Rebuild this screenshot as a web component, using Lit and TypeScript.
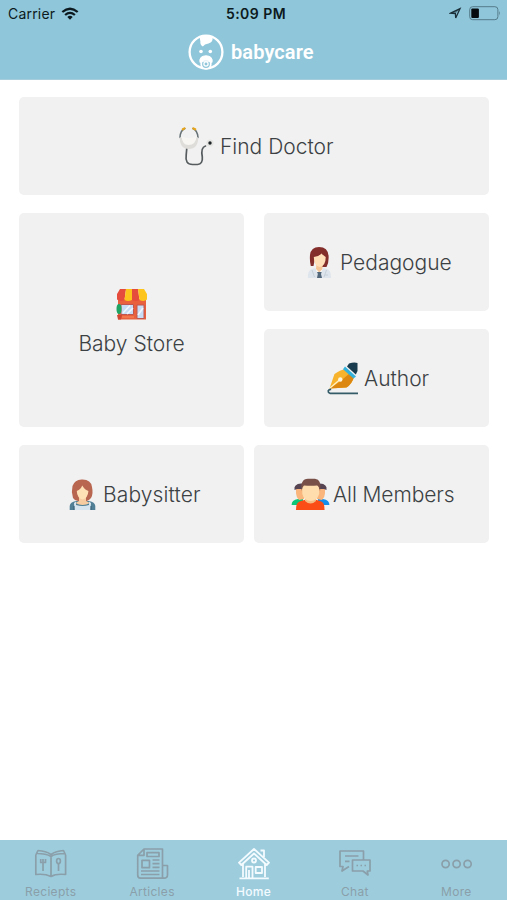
import { LitElement, html, css, svg } from "lit";
import { customElement, property } from "lit/decorators.js";
import { classMap } from "lit/directives/class-map.js";

const wifi = html`<svg width="18" height="13" viewBox="0 0 18 13" fill="none" stroke="#0c1a20" stroke-width="2.3">
  <path d="M1.3 5 Q9 -1.6 16.7 5" /><path d="M4.1 8 Q9 3.8 13.9 8" />
  <path d="M6.3 9.9 Q9 7.6 11.7 9.9 L9 12.7Z" fill="#0c1a20" stroke="none" />
</svg>`;

const arrow = html`<svg width="13" height="13" viewBox="0 0 13 13" fill="none" stroke="#1c3039" stroke-width="1.3">
  <path d="M1.6 6.2 L11 1.7 L6.7 11 L6.4 6.5Z" /><path d="M1.6 6.2 L11 1.7 L6.4 6.5Z" fill="#1c3039" fill-opacity=".5" stroke="none" />
</svg>`;

const battery = html`<svg width="32" height="15" viewBox="0 0 32 15">
  <rect x="0.7" y="0.7" width="28.2" height="13" rx="3" fill="none" stroke="#547b89" stroke-width="1" />
  <rect x="2.3" y="2.4" width="7.6" height="9.6" rx="1" fill="#050b0e" />
  <path d="M30.2 5 Q32 7.2 30.2 9.4Z" fill="#547b89" />
</svg>`;

const babyLogo = html`<svg width="36" height="36" viewBox="0 0 36 36" fill="none" stroke="#fff">
  <circle cx="18" cy="18" r="16.4" stroke-width="2.3" />
  <path d="M11.5 2.5 Q18 0 24.5 3 Q25.5 8 20.5 9.5 Q16.5 9.8 14.8 12.5 Q11.8 10.5 12.4 7.5 Z" fill="#fff" stroke="none" />
  <circle cx="13" cy="17.5" r="1.8" fill="#fff" stroke="none" /><circle cx="22.3" cy="17.5" r="1.8" fill="#fff" stroke="none" />
  <path d="M12 28.5 Q10.8 22 18 21.8 Q25.2 22 24 28.5 Q18 23.5 12 28.5Z" fill="#fff" stroke-width="1" />
  <circle cx="18" cy="30" r="4.8" fill="#8fc6da" stroke-width="1.8" />
  <circle cx="18" cy="30" r="2.1" stroke-width="1.3" />
  <path d="M14 27 H22" stroke-width="1.6" />
</svg>`;

const stethoscope = html`<svg width="36" height="40" viewBox="0 0 36 40" fill="none" stroke-linecap="round">
  <path d="M8.8 22 L8.2 29 Q6.8 38.5 14.5 38.5 H19.5 Q25 38 24.3 31 Q22.5 21.5 27.5 20" stroke="#565c5e" stroke-width="1.7" />
  <path d="M2 11.5 Q2.2 4.5 6.8 2.5 M20 11.5 Q19.5 4.5 15 2.5" stroke="#687377" stroke-width="1.6" />
  <path d="M4.8 3.3 L6.5 2.4 M17.2 3.3 L15.3 2.4" stroke="#e7a51c" stroke-width="2.2" />
  <path d="M1.8 11 Q11 16.5 20.2 11 Q20.3 23 10.8 23 Q1.5 23 1.8 11Z" fill="#deddd9" />
  <path d="M3.6 10 Q11 14.5 18.5 10 Q18 19 10.5 19 Q4 19 3.6 10Z" fill="#f7f6f3" />
  <circle cx="32" cy="17" r="3.6" fill="#e5e5e3" /><circle cx="32" cy="17" r="1.7" fill="#1d2224" />
</svg>`;

const store = html`<svg width="32" height="33" viewBox="0 0 32 33">
  <path d="M2 11 H30 V31.5 H2Z" fill="#e9603f" />
  <path d="M4 1 H10 L8.5 12 Q4.5 14 1 11.5 V6 Z" fill="#e64c3c" />
  <path d="M10 1 H16 V12 Q12 14 8.5 12Z" fill="#fdc51b" />
  <path d="M16 1 H22 L23.5 12 Q20 14 16 12Z" fill="#e64c3c" />
  <path d="M22 1 H28 L31 6 V11.5 Q28 14 23.5 12Z" fill="#fdc51b" />
  <path d="M5 16.5 H17.5 V26.5 H5Z M21 17 H28 V30.5 H21Z" fill="#c8dcf5" stroke="#c05650" stroke-width="1" />
  <path d="M7 25 L14 17.5 M11 26 L17 20 M22 27 L27 20" stroke="#f0f6ff" stroke-width="1.6" />
  <path d="M6 29 H18" stroke="#f2764d" stroke-width="2" />
  <ellipse cx="3" cy="21" rx="2.5" ry="5" fill="#1fa463" /><path d="M1 27 H6 L5 31.5 H2Z" fill="#cf4732" />
</svg>`;

const pedagogue = html`<svg width="25" height="33" viewBox="0 0 25 33">
  <path d="M0.8 32 Q0.5 24 5 23 L9 22 H15 L20 23 Q24.3 24 24 32Z" fill="#dfe5ec" />
  <path d="M8.5 22 L12 32 L16 22Z" fill="#f9fbfc" />
  <path d="M3.8 20 Q2.5 15 3 9 Q4 1 12 1 Q21 1 21.6 10 Q22 17 19.5 21 H15 V12 H8 L6.5 20Z" fill="#842e2c" />
  <path d="M9.5 17 H15.5 V23 L12.3 26.5 L9 23Z" fill="#f5c798" />
  <path d="M6.8 11 Q12 10.7 14.4 7.4 Q17 10 18.7 11 Q18.8 20 12.7 21 Q7 20 6.8 11Z" fill="#ffdfb7" />
  <path d="M10 26 H14.7 L14 28 L15 32 H10 L10.8 28Z" fill="#53677b" />
  <path d="M5 24 L7.5 31 M19.5 24 L17 31 M18 29 H21" stroke="#c6d0d9" stroke-width="1" />
</svg>`;

const pen = html`<svg width="32" height="33" viewBox="0 0 32 33">
  <path d="M2.5 26.5 L7.5 12 Q14 7.5 19 7 L27 15 Q25 22 19.5 25.5Z" fill="#f7b32b" />
  <path d="M2.5 26.5 L13 19.5 L23 11 L27 15 Q25 22 19.5 25.5Z" fill="#dc8810" />
  <path d="M3 26 L13 17.5" stroke="#fff2c8" stroke-width="1.2" /><circle cx="13.3" cy="17.5" r="2.2" fill="#fff6df" />
  <path d="M18 4.5 L29 14.5 L26.5 16.5 L16 7.2Z" fill="#34b2dc" />
  <path d="M22 1.5 Q27 0 30.5 1 V9 L28.8 12.5 L20 4.5Z" fill="#183b4d" />
  <path d="M31 31.3 H3 Q1 30.5 1.2 28.8 Q2 27.2 4.2 27.4" fill="none" stroke="#345b68" stroke-width="1.7" />
</svg>`;

const sitter = html`<svg width="27" height="33" viewBox="0 0 27 33">
  <path d="M4 20 Q2 14 3.5 8 Q6 1 13.5 1.5 Q22 1.5 23 9 Q24.5 16 22 20 Q19 24 16 23 H9Q6 23 4 20Z" fill="#b96650" />
  <path d="M0.7 32 V28 Q1 24 7 23 H20 Q26 24 26.3 28 V32Z" fill="#517f96" />
  <path d="M10 17 H17 V23 L21 25 Q13.5 29 6.5 25 L10 23Z" fill="#f6cca0" />
  <path d="M7.8 13 Q12 11 13.2 7.5 Q16 12 19.4 13 Q19 20 13.5 21.5 Q8 20 7.8 13Z" fill="#ffe1b6" />
  <path d="M7 23.5 V27 Q13.5 29 20 27 V23.5 L22 25 L21.5 32 H5.5 L5 25Z" fill="#d6e5ef" />
  <path d="M5 28 V32 M22 28 V32" stroke="#365f76" stroke-width="1" />
</svg>`;

const members = html`<svg width="39" height="33" viewBox="0 0 39 33">
  <path d="M0.6 27 Q0.5 22 7 21 H12 V27Z" fill="#0bc779" /><path d="M38.4 27 Q38.5 22 32 21 H27 V27Z" fill="#168fea" />
  <path d="M5 10 H13 V21 L8 22 Q5 19 5 15Z" fill="#f9b57c" /><path d="M34 10 H26 V21 L31 22 Q34 19 34 15Z" fill="#f9b57c" />
  <path d="M3.5 12 Q2.5 6 10 5.5 H13 V11 H6Z M35.5 12 Q36.5 6 29 5.5 H26 V11 H33Z" fill="#564452" />
  <path d="M5 32 Q4.5 24 10 23 L15 21.5 H24 L29 23 Q34 24 33.5 32Z" fill="#fb4d16" />
  <path d="M14 19 H25 V23 Q19.5 28 14 23Z" fill="#f5bd82" />
  <path d="M11.3 7 H28.2 V16 Q26 23 19.8 23 Q13 23 11.3 16Z" fill="#ffddac" />
  <path d="M10.5 13 Q9 1 17 .8 H24 Q31 1.5 29 13 Q28 8 26 7.5 Q20 8 13 7.5 Q11 9 10.5 13Z" fill="#795047" />
</svg>`;

const tabIcons: Record<string, unknown> = {
  Reciepts: svg`<path d="M4.2 6.5 Q13 6.5 18 9.5 Q22 6.5 31.8 6.5 M2.8 8 V27.5 Q12 26.5 18 29.5 Q23 26.5 32.6 27.5 V8 M18 9.5 V29 M2.8 8 L5 3.5 Q13 4 18 7.5 Q23 4 30.5 3.5 L32.6 8 M10 15 V24 M7.7 12 V15.5 H12.5 V12 M10 12 V16 M25.5 16.5 V24"/><ellipse cx="25.5" cy="14" rx="1.9" ry="2.5"/>`,
  Articles: svg`<path d="M9 2 H27.5 V31.2 H5.5 Q2.7 31 2.7 28 V8.3Z M9 2 V8.3 H2.7 M27.5 18.5 H32.5 V28 Q32.5 31.2 29 31.2 H6 M12 5.7 H24 V9.5 H12Z M7 13.3 H14.5 V20.7 H7Z M17.5 13 H24.5 M17.5 16.7 H24.5 M17.5 20.3 H24.5 M6 24 H24.5 M6 27.5 H24.5"/>`,
  Home: svg`<path d="M3 15.7 L18 2 L33 15.7 L30.7 18 L18 6.5 L5.3 18Z M7 17 V30 M29 17 V30 M3.5 31.3 H32.8 M10.2 31 V19.7 H16.5 V31 M13 31 V23 M19.7 20 H26 V26 H19.7Z M24.5 3.5 H28 V10"/><circle cx="18" cy="13.5" r="2"/>`,
  Chat: svg`<path d="M12 19.5 L5 24 L6 19.5 H3 V4 H26.5 V12.5 M15.5 13 H33 V24 H30.3 L31 28 L26 24 H15.5Z M8 9 H21.5 M8 14.3 H12.5"/><path d="M19.5 18.5 H21 M23.5 18.5 H25 M27.5 18.5 H29"/>`,
  More: svg`<circle cx="6.6" cy="17" r="3.6"/><circle cx="17.6" cy="17" r="3.6"/><circle cx="28.6" cy="17" r="3.6"/>`,
};

@customElement("app-tab")
class AppTab extends LitElement {
  @property() label = "";
  @property({ type: Boolean }) active = false;
  static styles = css`
    :host { display: block; flex: 1; }
    .tab { display: flex; flex-direction: column; align-items: center; padding-top: 7px; color: #8a9fa9; }
    .active { color: #f4fbff; }
    svg { display: block; fill: none; stroke: currentColor; stroke-width: 1.7; stroke-linejoin: round; }
    .active svg { stroke-width: 1.8; }
    .text { font: 400 12px/16px Inter, sans-serif; letter-spacing: 0.3px; margin-top: 3px; white-space: nowrap; }
    .active .text { font-weight: 500; }
  `;
  render() {
    return html`<div class=${classMap({ tab: true, active: this.active })}>
      <svg width="35" height="34" viewBox="0 0 35 34">${tabIcons[this.label]}</svg>
      <span class="text">${this.label}</span>
    </div>`;
  }
}

@customElement("app-root")
class AppRoot extends LitElement {
  static styles = css`
    :host { display: flex; flex-direction: column; height: 900px; width: 507px; background: #fff; overflow: hidden; font-family: Inter, sans-serif; }
    * { box-sizing: border-box; }
    svg { display: block; flex: none; }
    .header { height: 80px; background: #8fc6da; border-bottom: 1px solid #a5cddb; flex: none; }
    .status { display: grid; grid-template-columns: 1fr auto 1fr; height: 27px; align-items: center; color: #0c1a20; }
    .left { display: flex; align-items: center; gap: 6px; padding-left: 8px; }
    .carrier { font-size: 14px; letter-spacing: 0.2px; }
    .time { font-size: 14px; font-weight: 600; letter-spacing: 0.45px; padding-left: 5px; }
    .right { display: flex; align-items: center; justify-content: flex-end; gap: 7px; padding-right: 6px; }
    .brand { display: flex; align-items: center; padding: 7px 0 0 188px; gap: 7px; color: #fff; }
    .name { font: 600 20px/24px Roboto, sans-serif; margin-top: -1px; letter-spacing: 0.1px; }
    .content { flex: 1; padding: 17px 18px 0 19px; display: flex; flex-direction: column; gap: 18px; }
    .card { height: 98px; background: #f1f1f1; border-radius: 5px; display: flex; align-items: center; color: #3c4144; }
    .card span { font-size: 21px; line-height: 26px; font-weight: 300; white-space: nowrap; padding-top: 2px; }
    .doctor { padding-left: 159px; gap: 6px; }
    .middle { display: grid; grid-template-columns: 225px 225px; gap: 18px 20px; }
    .store { grid-row: span 2; height: 214px; flex-direction: column; padding-top: 75px; gap: 8px; }
    .pedagogue { padding-left: 43px; gap: 8px; }
    .author { padding-left: 63px; gap: 5px; }
    .bottom { display: grid; grid-template-columns: 225px 235px; gap: 10px; }
    .sitter { padding-left: 50px; gap: 7px; }
    .sitter span { letter-spacing: 0.12px; }
    .members { padding-left: 37px; gap: 3px; }
    .members span { letter-spacing: -0.08px; }
    .tabs { height: 60px; display: flex; background: #9dcddd; flex: none; }
  `;
  render() {
    return html`
      <div class="header">
        <div class="status">
          <div class="left"><span class="carrier">Carrier</span>${wifi}</div>
          <span class="time">5:09 PM</span>
          <div class="right">${arrow}${battery}</div>
        </div>
        <div class="brand">${babyLogo}<span class="name">babycare</span></div>
      </div>
      <div class="content">
        <div class="card doctor">${stethoscope}<span>Find Doctor</span></div>
        <div class="middle">
          <div class="card store">${store}<span>Baby Store</span></div>
          <div class="card pedagogue">${pedagogue}<span>Pedagogue</span></div>
          <div class="card author">${pen}<span>Author</span></div>
        </div>
        <div class="bottom">
          <div class="card sitter">${sitter}<span>Babysitter</span></div>
          <div class="card members">${members}<span>All Members</span></div>
        </div>
      </div>
      <div class="tabs">
        ${["Reciepts", "Articles", "Home", "Chat", "More"].map((l) => html`<app-tab label=${l} ?active=${l === "Home"}></app-tab>`)}
      </div>
    `;
  }
}
